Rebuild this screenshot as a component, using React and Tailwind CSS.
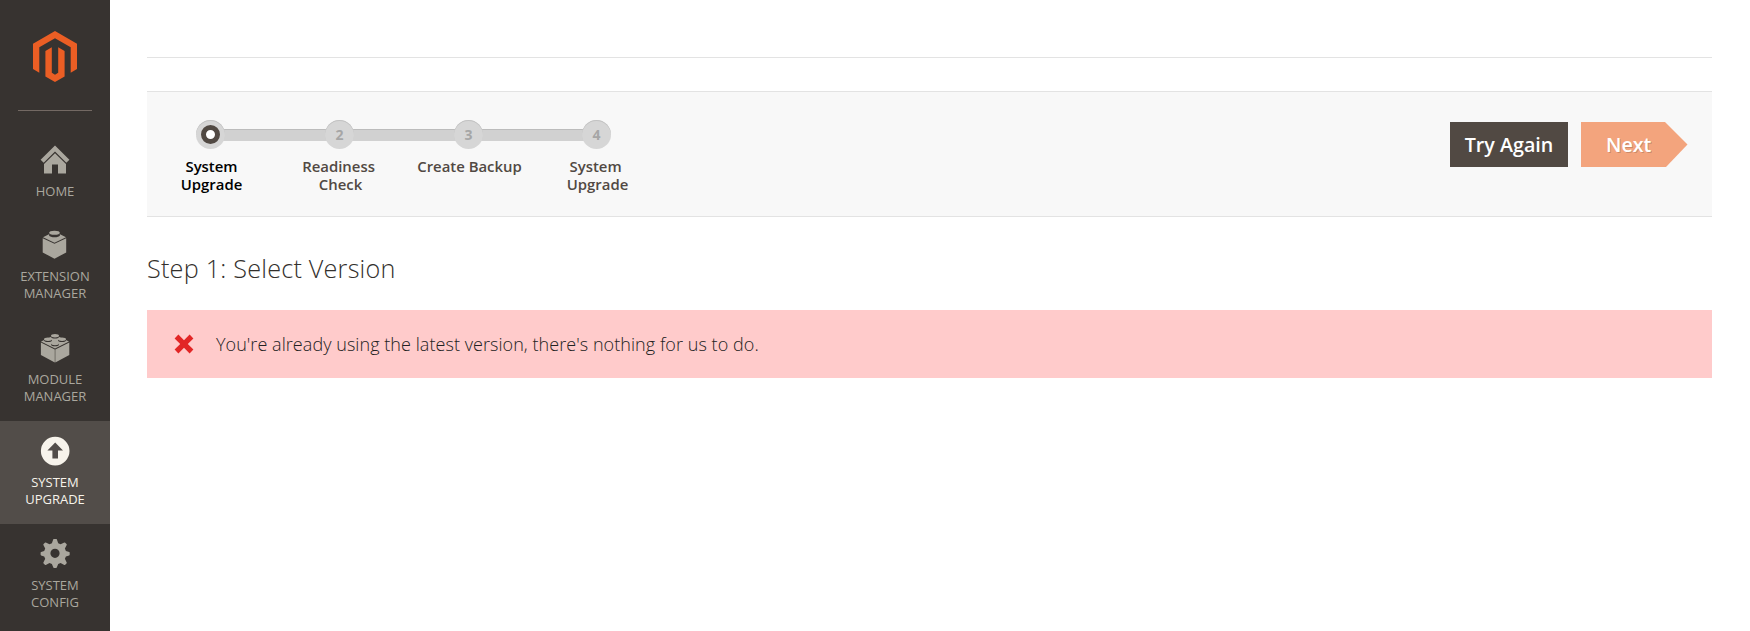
const HomeIcon = () => (
  <svg width="30" height="30" viewBox="0 0 30 30" fill="currentColor">
    <path d="M15 .6 29.4 14.8 26.3 17.8 15 6.6 3.7 17.8.6 14.8Z" />
    <path d="M15 8.3 26 19V28.6H18V19.6H12V28.6H4V19Z" />
  </svg>
);

const BrickIcon = () => (
  <svg width="30" height="30" viewBox="0 0 30 30">
    <g fill="currentColor">
      <path d="M2.7 8.2 14.5 13.8 26.2 8.2V22.4L14.5 28.8 2.7 22.4Z" />
      <path d="M3 7.2 9 4.3H20L26 7.2 14.5 12.7Z" />
    </g>
    <path fill="#373330" d="M9.2 2.8H19.8V5.2C19.3 8 9.7 8 9.2 5.2Z" />
    <ellipse cx="14.5" cy="2.8" rx="5.3" ry="2" fill="currentColor" />
  </svg>
);

const studs = [[15, 2.8], [8, 6.4], [22, 6.4], [15, 10.6]];

const BricksIcon = () => (
  <svg width="30" height="30" viewBox="0 0 30 30">
    <g fill="currentColor">
      <path d="M.9 9.6 14.8 16.6V29.4L.9 22ZM15.3 16.6 29.3 9.6V22L15.3 29.4Z" />
      <path d="M1 8.6 15 2 29 8.6 15 15.6Z" />
    </g>
    {studs.map(([x, y]) => (
      <g key={`${x}-${y}`}>
        <path
          fill="#373330"
          transform={`translate(${x} ${y})`}
          d="M-4 0H4V1.2C3.4 3.2-3.4 3.2-4 1.2Z"
        />
        <ellipse cx={x} cy={y - 0.1} rx="4" ry="1.7" fill="currentColor" />
      </g>
    ))}
  </svg>
);

const UpgradeIcon = () => (
  <svg width="30" height="30" viewBox="0 0 30 30" fill="currentColor">
    <path fillRule="evenodd" d="M15.2.8a14.3 14.3 0 1 0 0 28.6 14.3 14.3 0 0 0 0-28.6ZM15.2 6.4 23 14.4H18V22.4H12.4V14.4H7.4Z" />
  </svg>
);

const GearIcon = () => (
  <svg width="30" height="30" viewBox="0 0.7 30 30" fill="currentColor">
    <path fillRule="evenodd" d="M14 .6h2.1q.6 0 .8.6l1.3 3.8 2.4 1 3.7-1.8q.5-.2.9.2l1.3 1.3q.4.4.2.9l-1.8 3.7 1 2.4 3.3 1q.5.2.5.8v1.8q0 .6-.5.8l-3.3 1-1 2.4 1.8 3.7q.2.5-.2.9l-1.3 1.3q-.4.4-.9.2l-3.7-1.8-2.4 1-1.3 3.2q-.2.6-.8.6H14q-.6 0-.8-.6l-1.3-3.2-2.4-1-3.7 1.8q-.5.2-.9-.2l-1.3-1.3q-.4-.4-.2-.9l1.8-3.7-1-2.4-3.1-1q-.5-.2-.5-.8v-1.8q0-.6.5-.8l3.1-1 1-2.4-1.8-3.7q-.2-.5.2-.9l1.3-1.3q.4-.4.9-.2l3.7 1.8 2.4-1 1.3-3.8q.2-.6.8-.6ZM15 10.4a4.6 4.6 0 1 0 0 9.2 4.6 4.6 0 0 0 0-9.2Z" />
  </svg>
);

const NavItem = ({ icon, lines, active, short }) => (
  <a
    className={`flex shrink-0 flex-col items-center text-[13px] leading-[17px] ${
      short ? "h-[86px] pt-[14px]" : "h-[103px] pt-[15px]"
    } ${active ? "bg-[#524d49] text-[#f7f3eb]" : "text-[#aaa79e]"}`}
  >
    {icon}
    <span className="mt-[8px] text-center">
      {lines.map((l) => (
        <span key={l} className="block">{l}</span>
      ))}
    </span>
  </a>
);

const Step = ({ n, lines, active, last }) => (
  <li className={`relative flex w-[129px] shrink-0 flex-col items-center ${last ? "-ml-px" : ""} ${active ? "text-black" : "text-[#514943]"}`}>
    {!last && (
      <span className="absolute left-[64px] top-[9px] h-[12px] w-[129px] bg-[#d1d1d1] shadow-[inset_0_1px_0_#bcbcbc]" />
    )}
    <span className="relative mr-[2px] flex size-[29px] items-center justify-center rounded-full bg-[#d6d6d6] text-[14px] font-bold text-[#a6a6a6] shadow-[inset_0_1px_0_#c2c2c2]">
      {active ? <span className="size-[19px] rounded-full border-5 border-[#514943] bg-white" /> : n}
    </span>
    <span className="mt-[8px] text-center text-[14.9px] font-semibold leading-[18px]">
      {lines.map((l) => (
        <span key={l} className="block whitespace-pre">{l}</span>
      ))}
    </span>
  </li>
);

export default function App() {
  return (
    <div className="flex h-[631px] w-[1750px] overflow-hidden bg-white font-['Open_Sans',sans-serif] text-[#33302c]">
      <nav className="flex w-[110px] shrink-0 flex-col overflow-hidden bg-[#373330]">
        <div className="mx-[18px] flex h-[111px] shrink-0 justify-center border-b border-[#736963] pt-[31px]">
          <svg width="44" height="51" viewBox="0 0 44 51" fill="#eb5e24">
            <path d="M22 0 44 12.7V38.1L37.7 41.7V16.3L22 7.3 6.3 16.3V41.7L0 38.1V12.7Z" />
            <path d="M12.4 20 18.8 16.3V41.8L22 43.7 25.2 41.8V16.3L31.6 20V45.4L22 51 12.4 45.4Z" />
          </svg>
        </div>
        <div className="mt-5 flex flex-col">
          <NavItem icon={<HomeIcon />} lines={["HOME"]} short />
          <div className="-mt-[2px] flex flex-col">
            <NavItem icon={<BrickIcon />} lines={["EXTENSION", "MANAGER"]} />
            <NavItem icon={<BricksIcon />} lines={["MODULE", "MANAGER"]} />
            <NavItem icon={<UpgradeIcon />} lines={["SYSTEM", "UPGRADE"]} active />
            <NavItem icon={<GearIcon />} lines={["SYSTEM", "CONFIG"]} />
          </div>
        </div>
      </nav>
      <main className="ml-[37px] w-[1565px]">
        <div className="h-[58px] border-b border-[#e3e3e3]" />
        <section className="mt-[33px] flex h-[126px] items-start justify-between border-y border-[#e3e3e3] bg-[#f8f8f8]">
          <ol className="flex pt-[28px]">
            <Step n="1" lines={["System", "Upgrade"]} active />
            <Step n="2" lines={["Readiness ", "Check"]} />
            <Step n="3" lines={["Create Backup"]} />
            <Step n="4" lines={["System ", "Upgrade"]} last />
          </ol>
          <div className="mr-[24px] mt-[30px] flex gap-[13px] text-[19.7px] font-semibold text-white">
            <button className="flex h-[45px] w-[118px] items-center justify-center bg-[#514943] pt-px">Try Again</button>
            <button className="flex h-[45px] w-[107px] items-center bg-[#f3a47d] pl-[25px] pt-px [clip-path:polygon(0_0,84px_0,106.5px_50%,85px_100%,0_100%)] [text-shadow:1px_1px_0_rgba(0,0,0,0.18)]">
              Next
            </button>
          </div>
        </section>
        <h1 className="mt-[32px] text-[25.2px] font-light leading-[38px] tracking-[0.22px]">Step 1: Select Version</h1>
        <div className="mt-[23px] flex h-[68px] items-center bg-[#ffcbcb] pl-[27px] text-[18px] font-light tracking-[0.055px] text-[#222222]">
          <svg width="20" height="20" viewBox="0 0 20 20" fill="#e22626">
            <path d="M.6 4.4 4.4.6 10 6.2 15.6.6 19.4 4.4 13.8 10 19.4 15.6 15.6 19.4 10 13.8 4.4 19.4.6 15.6 6.2 10Z" />
          </svg>
          <p className="ml-[22px]">You're already using the latest version, there's nothing for us to do.</p>
        </div>
      </main>
    </div>
  );
}
